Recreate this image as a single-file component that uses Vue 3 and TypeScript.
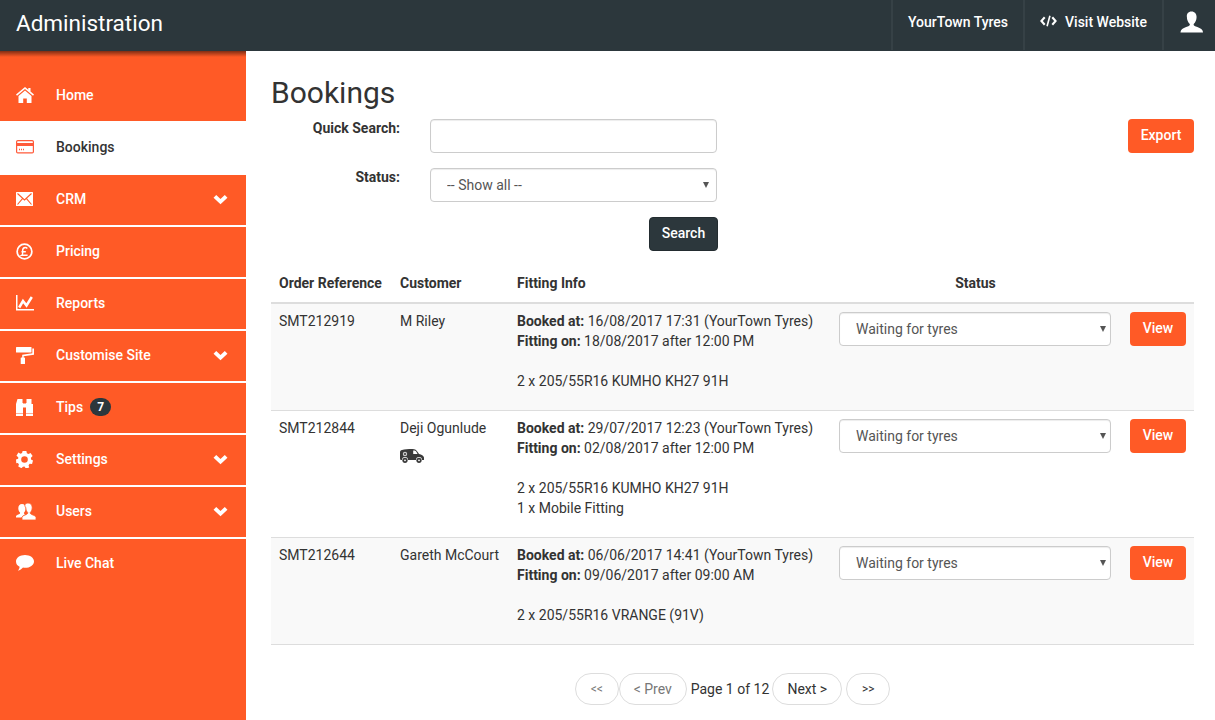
<script setup lang="ts">
interface NavItem { label: string; icon: string; active?: boolean; arrow?: boolean; badge?: string }
interface Row { ref: string; customer: string; booked: string; fitting: string; items: string[]; van?: boolean }

const nav: NavItem[] = [
  { label: 'Home', icon: 'home' },
  { label: 'Bookings', icon: 'card', active: true },
  { label: 'CRM', icon: 'mail', arrow: true },
  { label: 'Pricing', icon: 'euro' },
  { label: 'Reports', icon: 'chart' },
  { label: 'Customise Site', icon: 'roller', arrow: true },
  { label: 'Tips', icon: 'binoculars', badge: '7' },
  { label: 'Settings', icon: 'cog', arrow: true },
  { label: 'Users', icon: 'users', arrow: true },
  { label: 'Live Chat', icon: 'chat' },
]

const rows: Row[] = [
  { ref: 'SMT212919', customer: 'M Riley', booked: '16/08/2017 17:31 (YourTown Tyres)', fitting: '18/08/2017 after 12:00 PM', items: ['2 x 205/55R16 KUMHO KH27 91H'] },
  { ref: 'SMT212844', customer: 'Deji Ogunlude', booked: '29/07/2017 12:23 (YourTown Tyres)', fitting: '02/08/2017 after 12:00 PM', items: ['2 x 205/55R16 KUMHO KH27 91H', '1 x Mobile Fitting'], van: true },
  { ref: 'SMT212644', customer: 'Gareth McCourt', booked: '06/06/2017 14:41 (YourTown Tyres)', fitting: '09/06/2017 after 09:00 AM', items: ['2 x 205/55R16 VRANGE (91V)'] },
]
</script>

<template>
  <div class="page">
    <header class="topbar">
      <div class="brand">Administration</div>
      <div class="top-links">
        <a class="top-link">YourTown Tyres</a>
        <a class="top-link">
          <svg class="code-icon" viewBox="0 0 18 12" width="17" height="12"><path d="M5 2 1.500 6 5 10M13 2l3.500 4L13 10" fill="none" stroke="#fff" stroke-width="2.200"/><path d="M10.500 .5 7.500 11.500" fill="none" stroke="#fff" stroke-width="1.700"/></svg>
          Visit Website
        </a>
        <a class="top-link user-link">
          <svg viewBox="0 0 24 22" width="23" height="22"><path fill="#fff" d="M12 0c3.400 0 5.300 2.500 5.300 5.800 0 3-1.300 6-3 7.300-.3 1 .2 1.900 1.500 2.400 3 1.100 6.600 2.300 7.700 4.300.3.500.4 1.200.5 2.200H.5c.1-1 .2-1.700.5-2.200 1.100-2 4.700-3.200 7.700-4.300 1.300-.5 1.800-1.400 1.500-2.400-1.700-1.300-3-4.300-3-7.300C6.700 2.500 8.600 0 12 0z"/></svg>
        </a>
      </div>
    </header>

    <div class="body-row">
      <aside class="sidebar">
        <a v-for="item in nav" :key="item.label" class="nav-item" :class="{ active: item.active }">
          <span class="nav-icon">
            <svg v-if="item.icon === 'home'" viewBox="0 0 18 16" width="18" height="16"><path fill="#fff" d="M9 0 0 7.500l1 1.200L9 2l8 6.700 1-1.200L14.500 4.600V1h-2.200v1.700L9 0z"/><path fill="#fff" d="M9 3.500 2.500 9v7h4.700v-4.500h3.600V16h4.700V9L9 3.500z"/></svg>
            <svg v-else-if="item.icon === 'card'" viewBox="0 0 18 14" width="18" height="14"><rect x=".6" y=".6" width="16.800" height="12.300" rx="1.200" fill="none" stroke="#ff5a3a" stroke-width="1.200"/><rect x="1" y="3" width="16" height="3" fill="#ff5a3a"/><path d="M3 9.500h1M5 9.500h1M7 9.500h1" stroke="#ff5a3a" stroke-width="1.500"/></svg>
            <svg v-else-if="item.icon === 'mail'" viewBox="0 0 17 14" width="17" height="14"><rect width="17" height="14" rx=".5" fill="#fff"/><path d="M1.500 1.500 8.500 8l7-6.500M1.500 12.500l5-5.800M15.500 12.500l-5-5.800" fill="none" stroke="#ff5a26" stroke-width="1.100"/></svg>
            <svg v-else-if="item.icon === 'euro'" viewBox="0 0 18 18" width="17" height="17"><circle cx="9" cy="9" r="7.800" fill="none" stroke="#fff" stroke-width="1.800"/><path d="M12 5.800C11.300 5 10.500 4.800 9.800 4.800 8 4.800 7 6.300 7 8.200v2.900c0 .8-.4 1.500-1 1.900h6.300M5.800 9.300h4.600" fill="none" stroke="#fff" stroke-width="1.500"/></svg>
            <svg v-else-if="item.icon === 'chart'" viewBox="0 0 18 16" width="18" height="16"><path fill="#fff" d="M0 0h1.500v14H18v1.500H0z"/><path d="M3.200 12.500 7 6l3.500 4.500L15.800 2" fill="none" stroke="#fff" stroke-width="2.500"/></svg>
            <svg v-else-if="item.icon === 'roller'" viewBox="0 0 18 17" width="18" height="17"><rect width="15.500" height="5.500" rx=".5" fill="#fff"/><path fill="#fff" d="M16.300 1.500H18V7.700l-10.300 1.500V11H6.200V7.800l10.100-1.500z"/><rect x="4.700" y="10.500" width="4.300" height="6.500" rx=".6" fill="#fff"/></svg>
            <svg v-else-if="item.icon === 'binoculars'" viewBox="0 0 17 17" width="17" height="17"><path fill="#fff" d="M1.500 0h5v4H7v10.500H0V5zM10 4h.5V0h5v5l1.500 0v9.500h-7z"/><rect x="7" y="4.500" width="3" height="4" fill="#fff"/><rect y="15" width="7" height="2" fill="#fff"/><rect x="10" y="15" width="7" height="2" fill="#fff"/></svg>
            <svg v-else-if="item.icon === 'cog'" viewBox="0 0 18 18" width="17" height="17"><path fill="#fff" fill-rule="evenodd" d="M7 0h4l.5 2.500 1.700.8L15.400 2l2.200 3.300-1.800 1.800.1 1.900 2.100 1-1 3.800-2.500-.2-1.200 1.400.7 2.400-3.500 1.200L9 16.500l-1.600.2-1.700 1.500-3.300-1.700.7-2.500-1.200-1.300L.3 13l-.3-4 2.300-.8.100-1.500L.5 5l2-3.300 2.300 1.200 1.600-.9zM9 5.500a3.500 3.500 0 1 0 0 7 3.500 3.500 0 0 0 0-7z"/></svg>
            <svg v-else-if="item.icon === 'users'" viewBox="0 0 20 17" width="20" height="17"><path fill="#fff" d="M6 1c2.300 0 3.700 1.700 3.700 4.200 0 1.800-.8 3.600-1.800 4.600-.1.800.3 1.200 1.200 1.600-1.600.7-3 1.500-3.500 3.100H0v-1.300c.4-1 2-1.600 3-2 .9-.4 1.300-.8 1-1.600C3 8.600 2.300 7 2.300 5.200 2.300 2.700 3.700 1 6 1z"/><path fill="#fff" stroke="#ff5a26" stroke-width=".8" d="M12 0c2.800 0 4.200 2.100 4.200 4.700 0 2-1 4-2 5 0 1 .7 1.400 2 2 1.700.7 3.400 1.300 3.800 2.600V17H6v-2.700c.4-1.300 2.100-1.900 3.800-2.600 1.300-.6 2-1 2-2-1-1-2-3-2-5C7.800 2.100 9.200 0 12 0z"/></svg>
            <svg v-else viewBox="0 0 18 16" width="18" height="16"><path fill="#fff" d="M9 0c5 0 9 2.800 9 6.400s-4 6.400-9 6.400c-.7 0-1.400 0-2-.2C5.700 14 4 15.300 1.800 15.700c1-1 1.700-2.200 1.800-4C1.400 10.700 0 8.700 0 6.400 0 2.800 4 0 9 0z"/></svg>
          </span>
          <span class="nav-label">{{ item.label }}</span>
          <span v-if="item.badge" class="badge">{{ item.badge }}</span>
          <svg v-if="item.arrow" class="chevron" viewBox="0 0 16 11" width="15" height="11"><path d="M2 2.200 8 7.800l6-5.600" fill="none" stroke="#fff" stroke-width="4.200"/></svg>
        </a>
      </aside>

      <main class="content">
        <h1>Bookings</h1>
        <div class="filters">
          <div class="fields">
            <div class="field">
              <label>Quick Search:</label>
              <input class="control" type="text" />
            </div>
            <div class="field">
              <label>Status:</label>
              <span class="select-wrap">
                <select class="control">
                  <option>-- Show all --</option>
                </select>
              </span>
            </div>
            <div class="search-row">
              <button class="btn dark">Search</button>
            </div>
          </div>
          <button class="btn orange export">Export</button>
        </div>

        <table class="bookings">
          <thead>
            <tr>
              <th class="c1">Order Reference</th>
              <th class="c2">Customer</th>
              <th class="c3">Fitting Info</th>
              <th class="c4">Status</th>
              <th class="c5"></th>
            </tr>
          </thead>
          <tbody>
            <tr v-for="row in rows" :key="row.ref">
              <td>{{ row.ref }}</td>
              <td>
                {{ row.customer }}
                <svg v-if="row.van" class="van" viewBox="0 0 24 14" width="24" height="14"><path fill="#3a3a3a" fill-rule="evenodd" d="M2 1C4.500.3 8 0 12.500 0c2.500 0 4 1 5.500 3.500l1 1.500c2.500.5 4.500 1.500 5 3.500V11h-2a3 3 0 0 0-6 0H8a3 3 0 0 0-6 0H.5L0 9.500V3.500C0 2 .7 1.300 2 1zM13.200 1.500V5H17.500l-1-2C15.800 1.900 15 1.500 13.200 1.500z"/><circle cx="5" cy="5" r="2.200" fill="#ccc"/><circle cx="5" cy="5" r="1" fill="#3a3a3a"/><circle cx="5" cy="11.300" r="2.600" fill="#3a3a3a"/><circle cx="5" cy="11.300" r=".9" fill="#fff"/><circle cx="19" cy="11.300" r="2.600" fill="#3a3a3a"/><circle cx="19" cy="11.300" r=".9" fill="#fff"/></svg>
              </td>
              <td>
                <div><b>Booked at:</b> {{ row.booked }}</div>
                <div class="fit-line"><b>Fitting on:</b> {{ row.fitting }}</div>
                <div v-for="it in row.items" :key="it">{{ it }}</div>
              </td>
              <td>
                <span class="select-wrap block">
                  <select class="control status">
                    <option>Waiting for tyres</option>
                  </select>
                </span>
              </td>
              <td><button class="btn orange view">View</button></td>
            </tr>
          </tbody>
        </table>

        <nav class="pager">
          <a class="pill muted first">&lt;&lt;</a>
          <a class="pill muted prev">&lt; Prev</a>
          <span class="page-text">Page 1 of 12</span>
          <a class="pill next">Next &gt;</a>
          <a class="pill last">&gt;&gt;</a>
        </nav>
      </main>
    </div>
  </div>
</template>

<style>
html, body { margin: 0; background: #fff; }
</style>

<style scoped>
* { box-sizing: border-box; }
.page { height: 720px; overflow: hidden; font-family: Roboto, sans-serif; font-size: 14px; line-height: 20px; color: #333; display: flex; flex-direction: column; }
.topbar { height: 51px; flex: none; background: #2c373c; color: #fff; display: flex; justify-content: space-between; }
.brand { font-size: 22.500px; padding: 10px 16px; line-height: 27px; }
.top-links { display: flex; }
.top-link { display: flex; align-items: center; gap: 8px; height: 50px; padding: 0 15px 6px; border-left: 2px solid #364146; font-size: 14px; font-weight: 500; white-space: nowrap; }
.code-icon { margin-top: -3px; }
.user-link { padding: 0 0 6px 16px; width: 53px; }
.body-row { flex: 1; display: flex; min-height: 0; }
.sidebar { width: 246px; flex: none; background: linear-gradient(rgba(0,0,0,.5), rgba(0,0,0,0) 6px), #ff5a26; padding-top: 20px; }
.nav-item { display: flex; align-items: center; height: 52px; padding: 0 17px 2px 16px; border-bottom: 2px solid #fff; color: #fff; font-weight: 500; }
.nav-item:last-child { border-bottom: 0; padding-bottom: 4px; }
.nav-item.active { background: #fff; color: #333; }
.nav-icon { width: 40px; flex: none; display: flex; align-items: center; }
.badge { margin-left: 7px; width: 21px; height: 18px; border-radius: 9px; background: #2c373c; color: #fff; font-size: 12px; font-weight: 700; line-height: 18px; text-align: center; }
.chevron { margin-left: auto; margin-right: 1px; }
.content { flex: 1; padding: 0 21px 0 25px; min-width: 0; }
h1 { margin: 24px 0 8px; font-size: 30px; font-weight: 400; line-height: 36px; }
.filters { display: flex; justify-content: space-between; align-items: flex-start; }
.fields { width: 447px; }
.field { display: flex; margin-bottom: 15px; }
.field label { width: 129px; margin: -1px 30px 0 0; text-align: right; font-weight: 700; }
.control { display: block; height: 34px; width: 287px; border: 1px solid #ccc; border-radius: 4px; background-color: #fff; color: #555; font-family: Roboto, sans-serif; font-size: 14px; padding: 6px 16px; box-shadow: inset 0 1px 1px rgba(0,0,0,.075); outline: 0; appearance: none; }
.select-wrap { position: relative; display: block; }
.select-wrap::after { content: ""; position: absolute; right: 8px; top: 14px; border-style: solid; border-width: 6px 3px 0; border-color: #555 transparent transparent; pointer-events: none; }
.search-row { display: flex; justify-content: flex-end; }
.btn { display: block; height: 34px; border: 1px solid transparent; border-radius: 4px; color: #fff; font-family: Roboto, sans-serif; font-size: 14px; font-weight: 500; padding: 0 0 3px; }
.dark { background: #2c373c; border-color: #232c30; width: 69px; }
.orange { background: #ff5a26; }
.export { width: 66px; }
.bookings { width: 923px; margin-top: 13px; border-collapse: collapse; table-layout: fixed; }
th { height: 39px; padding: 0 8px; text-align: left; font-weight: 700; border-bottom: 2px solid #ddd; vertical-align: middle; }
.c1 { width: 121px; }
.c2 { width: 117px; }
.c3 { width: 322px; }
th.c4 { width: 291px; text-align: center; padding-right: 10px; }
.c5 { width: 72px; }
td { padding: 7px 8px 19px; vertical-align: top; border-bottom: 1px solid #ddd; }
tbody tr:nth-child(odd) { background: #f9f9f9; }
.fit-line { margin-bottom: 20px; }
.van { display: block; margin-top: 11px; }
.block { margin-top: 1px; }
.status { width: 272px; }
.view { width: 56px; margin-top: 1px; }
.pager { display: flex; justify-content: center; align-items: center; margin-top: 28px; }
.pill { height: 32px; border: 1px solid #ddd; border-radius: 16px; display: flex; align-items: center; justify-content: center; background: #fff; }
.muted { color: #777; }
.first { width: 44px; font-size: 12px; }
.prev { width: 68px; }
.page-text { margin: 0 3px 0 4px; }
.next { width: 70px; }
.last { width: 44px; margin-left: 4px; font-size: 12px; }
</style>
